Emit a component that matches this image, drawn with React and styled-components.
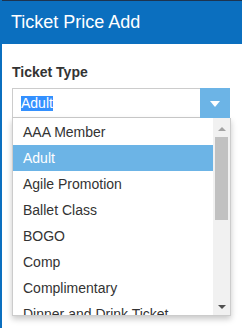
import React from "react";
import styled, { createGlobalStyle, css } from "styled-components";

const GlobalStyle = createGlobalStyle`
  html, body {
    margin: 0;
    padding: 0;
    background: #ffffff;
    font-family: "Liberation Sans", Arial, sans-serif;
  }
`;

const Modal = styled.div`
  width: 242px;
  height: 328px;
  box-sizing: border-box;
  border-left: 2px solid #0b6fbf;
  background: #ffffff;
  overflow: hidden;
`;

const Header = styled.div`
  height: 44px;
  box-sizing: border-box;
  border-top: 1px solid #1d3450;
  background: #0b6fbf;
  color: #ffffff;
  font-size: 18px;
  display: flex;
  align-items: center;
  padding-left: 9px;
  padding-bottom: 1px;
`;

const Body = styled.div`
  padding: 20px 10px 0 10px;
`;

const Label = styled.div`
  font-size: 14px;
  font-weight: bold;
  line-height: 16px;
  color: #333333;
  margin-bottom: 8px;
`;

const SelectBox = styled.div`
  width: 218px;
  height: 30px;
  box-sizing: border-box;
  border: 1px solid #cccccc;
  display: flex;
  align-items: stretch;
`;

const SelectValue = styled.div`
  flex: 1;
  display: flex;
  align-items: center;
  padding-left: 8px;
  font-size: 14px;
`;

const Selected = styled.span`
  background: #3390ff;
  color: #ffffff;
  line-height: 15px;
`;

const ArrowButton = styled.div`
  width: 30px;
  margin: -1px -1px -1px 0;
  background: #6cb4e6;
  display: flex;
  align-items: center;
  justify-content: center;
`;

const Triangle = styled.div`
  width: 0;
  height: 0;
  border-left: 5px solid transparent;
  border-right: 5px solid transparent;
  border-top: 6px solid #ffffff;
  margin-top: 1px;
`;

const ListBox = styled.div`
  width: 219px;
  height: 198px;
  box-sizing: border-box;
  border: 1px solid #cccccc;
  border-top: none;
  box-shadow: 0 3px 6px rgba(0, 0, 0, 0.22);
  display: grid;
  grid-template-columns: 1fr 17px;
  background: #ffffff;
`;

const Items = styled.div`
  overflow: hidden;
  padding-top: 1px;
`;

const Item = styled.div`
  height: 26px;
  line-height: 26px;
  padding-left: 10px;
  font-size: 14px;
  color: #333333;
  white-space: nowrap;
  ${props =>
    props.$active &&
    css`
      background: #6cb4e6;
      color: #ffffff;
    `}
`;

const ScrollBar = styled.div`
  background: #f1f1f1;
  display: flex;
  flex-direction: column;
  align-items: center;
`;

const ScrollArrow = styled.div`
  width: 0;
  height: 0;
  border-left: 4px solid transparent;
  border-right: 4px solid transparent;
  ${props =>
    props.$down
      ? css`
          border-top: 4px solid #505050;
          margin-top: auto;
          margin-bottom: 6px;
        `
      : css`
          border-bottom: 4px solid #a3a3a3;
          margin-top: 9px;
        `}
`;

const Thumb = styled.div`
  width: 13px;
  height: 83px;
  background: #c1c1c1;
  margin-top: 6px;
`;

const options = [
  "AAA Member",
  "Adult",
  "Agile Promotion",
  "Ballet Class",
  "BOGO",
  "Comp",
  "Complimentary",
  "Dinner and Drink Ticket"
];

export default function App() {
  return (
    <>
      <GlobalStyle />
      <Modal>
        <Header>Ticket Price Add</Header>
        <Body>
          <Label>Ticket Type</Label>
          <SelectBox>
            <SelectValue>
              <Selected>Adult</Selected>
            </SelectValue>
            <ArrowButton>
              <Triangle />
            </ArrowButton>
          </SelectBox>
          <ListBox>
            <Items>
              {options.map(o => (
                <Item key={o} $active={o === "Adult"}>
                  {o}
                </Item>
              ))}
            </Items>
            <ScrollBar>
              <ScrollArrow />
              <Thumb />
              <ScrollArrow $down />
            </ScrollBar>
          </ListBox>
        </Body>
      </Modal>
    </>
  );
}
